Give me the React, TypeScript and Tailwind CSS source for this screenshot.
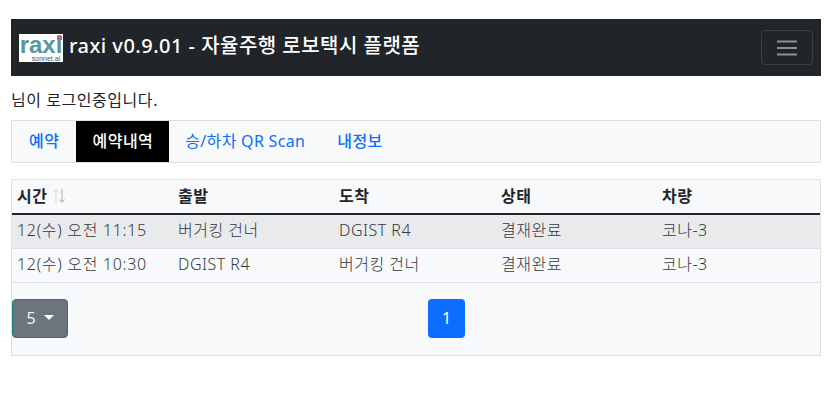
const font = "font-['Noto_Sans','Noto_Sans_CJK_KR',sans-serif]";

const rows = [
  { time: "12(수) 오전 11:15", from: "버거킹 건너", to: "DGIST R4", status: "결재완료", car: "코나-3" },
  { time: "12(수) 오전 10:30", from: "DGIST R4", to: "버거킹 건너", status: "결재완료", car: "코나-3" },
];

function Logo() {
  return (
    <div className="w-[44px] h-[28px] bg-white flex flex-col items-center shrink-0">
      <span className="relative mt-[1px] h-[20px] text-[#5a979b] text-[24px] leading-[20px] font-bold font-['Liberation_Sans',sans-serif]">
        raxi
        <span className="absolute right-[0px] top-[1px] w-[5px] h-[4px] bg-[#c8626c]" />
      </span>
      <span className="text-[#555] text-[7px] leading-[7px] pl-[10px] font-['Liberation_Sans',sans-serif]">sonnet.ai</span>
    </div>
  );
}

function Navbar() {
  return (
    <nav className="h-[57px] bg-[#212529] flex items-center justify-between pl-[8px] pr-[8px]">
      <div className="flex items-center gap-[6px]">
        <Logo />
        <span className="text-white text-[20px] font-medium leading-[30px] tracking-[0.48px] pb-[3px]">raxi v0.9.01 - 자율주행 로보택시 플랫폼</span>
      </div>
      <button className="w-[52px] h-[35px] rounded-[4px] border border-[#3a3e43] flex items-center justify-center">
        <svg width="20" height="16" viewBox="0 0 20 16">
          <path d="M0 1.5h20M0 8h20M0 14.5h20" stroke="#8f9194" strokeWidth="2" />
        </svg>
      </button>
    </nav>
  );
}

function Tabs() {
  return (
    <div className="h-[43px] bg-[#f8f9fa] border border-[#dfdfdf] flex items-stretch text-[16px] font-medium tracking-[0.5px]">
      <a className="px-[17px] pb-[2px] flex items-center text-[#0d6efd]">예약</a>
      <a className="px-[16px] pb-[2px] flex items-center bg-black text-white">예약내역</a>
      <a className="px-[16px] pb-[2px] flex items-center text-[#0d6efd] font-normal tracking-[0.3px]">승/하차 QR Scan</a>
      <a className="px-[16px] pb-[2px] flex items-center text-[#0d6efd]">내정보</a>
    </div>
  );
}

function SortIcon() {
  return (
    <svg width="14" height="16" viewBox="0 0 14 16" className="ml-[5px]">
      <path d="M4 15V2M1.5 4.5 4 1.5l2.5 3" stroke="#d4d6d8" strokeWidth="1" fill="none" />
      <path d="M10 1v13M7.5 11.5l2.5 3 2.5-3" stroke="#a9acaf" strokeWidth="1" fill="none" />
    </svg>
  );
}

function Table() {
  const cols = "grid grid-cols-[161px_161px_162px_161px_1fr] px-[5px] tracking-[0.5px]";
  return (
    <div className="h-[177px] bg-[#f8f9fa] border border-[#dfe0e1] flex flex-col text-[16px] text-[#212529]">
      <div className={`${cols} h-[35px] items-center border-b-2 border-[#212529] font-bold pb-[2px]`}>
        <div className="flex items-center">시간<SortIcon /></div>
        <div>출발</div>
        <div>도착</div>
        <div>상태</div>
        <div>차량</div>
      </div>
      {rows.map((r, i) => (
        <div
          key={r.time}
          className={`${cols} h-[34px] items-center border-b border-[#dee2e6] font-light text-[#34383d] pb-[3px] ${i === 0 ? "bg-[#e9eaec]" : ""}`}
        >
          <div className="tracking-[0.7px]">{r.time}</div>
          <div>{r.from}</div>
          <div>{r.to}</div>
          <div>{r.status}</div>
          <div>{r.car}</div>
        </div>
      ))}
      <div className="relative pt-[16px]">
        <button className="w-[56px] h-[39px] pb-[2px] rounded-[4px] bg-[#6c757d] border border-[#1f7a7a] text-[#f1f2f3] flex items-center justify-center gap-[8px]">
          5
          <span className="w-0 h-0 border-x-[5px] border-x-transparent border-t-[5px] border-t-white" />
        </button>
        <button className="absolute left-[416px] top-[16px] w-[37px] h-[39px] pb-[2px] rounded-[4px] bg-[#0d6efd] text-white">1</button>
      </div>
    </div>
  );
}

export default function App() {
  return (
    <div className={`w-[828px] h-[406px] bg-white pt-[19px] pl-[11px] pr-[7px] ${font}`}>
      <Navbar />
      <p className="h-[44px] pt-[12px] text-[16px] leading-[24px] tracking-[0.55px] text-[#212529]">님이 로그인중입니다.</p>
      <Tabs />
      <div className="h-[16px]" />
      <Table />
    </div>
  );
}
